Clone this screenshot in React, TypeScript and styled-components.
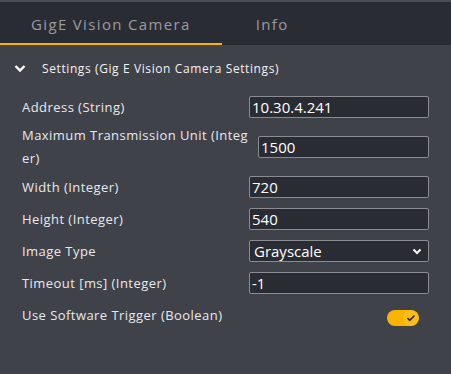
import React from 'react'
import styled, { createGlobalStyle } from 'styled-components'

const GlobalStyle = createGlobalStyle`
    body {
        margin: 0;
        background: #40424a;
        font-family: 'Open Sans', 'Liberation Sans', sans-serif;
    }
`

type Field = {
    label: string
    value: string
    kind: 'text' | 'select' | 'toggle'
    inputWidth?: number
}

const fields: Field[] = [
    { label: 'Address (String)', value: '10.30.4.241', kind: 'text' },
    { label: 'Maximum Transmission Unit (Integer)', value: '1500', kind: 'text', inputWidth: 171 },
    { label: 'Width (Integer)', value: '720', kind: 'text' },
    { label: 'Height (Integer)', value: '540', kind: 'text' },
    { label: 'Image Type', value: 'Grayscale', kind: 'select' },
    { label: 'Timeout [ms] (Integer)', value: '-1', kind: 'text' },
    { label: 'Use Software Trigger (Boolean)', value: 'true', kind: 'toggle' },
]

function App() {
    return (
        <Wrapper>
            <GlobalStyle />
            <TabBar>
                <Tab active>GigE Vision Camera</Tab>
                <Tab $left={34}>Info</Tab>
            </TabBar>
            <Section>
                <SectionHeader>
                    <svg width='12' height='9' viewBox='0 0 12 9'>
                        <path d='M1.5 2 L6 6.5 L10.5 2' fill='none' stroke='#ffffff' strokeWidth='2.4' />
                    </svg>
                    <span>Settings (Gig E Vision Camera Settings)</span>
                </SectionHeader>
                <FieldList>
                    {fields.map((f) => (
                        <Row key={f.label} tall={f.inputWidth !== undefined}>
                            <Label>{f.label}</Label>
                            {f.kind === 'text' && <TextInput defaultValue={f.value} $width={f.inputWidth ?? 180} />}
                            {f.kind === 'select' && (
                                <SelectBox>
                                    <span>{f.value}</span>
                                    <svg width='10' height='7' viewBox='0 0 10 7'>
                                        <path d='M1.5 1.5 L5 5 L8.5 1.5' fill='none' stroke='#ffffff' strokeWidth='2' />
                                    </svg>
                                </SelectBox>
                            )}
                            {f.kind === 'toggle' && (
                                <ToggleCell>
                                    <Toggle>
                                        <Knob>
                                            <svg width='10' height='8' viewBox='0 0 10 8'>
                                                <path d='M1.5 4.2 L3.8 6.3 L8.5 1.5' fill='none' stroke='#2b2b2b' strokeWidth='1.6' />
                                            </svg>
                                        </Knob>
                                    </Toggle>
                                </ToggleCell>
                            )}
                        </Row>
                    ))}
                </FieldList>
            </Section>
        </Wrapper>
    )
}

export default App

const Wrapper = styled.main`
    width: 451px;
    height: 374px;
    background: #40424a;
    display: flex;
    flex-direction: column;
`

const TabBar = styled.div`
    display: flex;
    height: 43px;
    border-top: 2px solid #4a4c53;
    background: #2a2c33;
`

const Tab = styled.div<{ active?: boolean; $left?: number }>`
    padding: 0 31px 0 ${(p) => p.$left ?? 31}px;
    display: flex;
    align-items: center;
    font-size: 15px;
    letter-spacing: 1.35px;
    color: #9a9ba0;
    box-shadow: ${(p) => (p.active ? 'inset 0 -2px 0 #f8b400' : 'none')};
`

const Section = styled.section`
    display: flex;
    flex-direction: column;
`

const SectionHeader = styled.div`
    display: flex;
    align-items: center;
    gap: 16px;
    padding: 0 14px;
    height: 46px;
    color: #f2f2f2;
    font-size: 12px;
    letter-spacing: 0.6px;
`

const FieldList = styled.div`
    display: flex;
    flex-direction: column;
    padding: 0 22px;
`

const Row = styled.div<{ tall?: boolean }>`
    display: flex;
    align-items: center;
    min-height: ${(p) => (p.tall ? 48 : 32)}px;
    gap: 8px;
`

const Label = styled.div`
    flex: 1;
    color: #e8e8ea;
    font-size: 13px;
    letter-spacing: 0.45px;
    line-height: 23px;
    word-break: break-all;
`

const TextInput = styled.input<{ $width: number }>`
    box-sizing: border-box;
    width: ${(p) => p.$width}px;
    height: 22px;
    padding: 0 2px;
    background: #2a2c33;
    border: 1px solid #8a8c91;
    border-radius: 2px;
    color: #ffffff;
    font-family: inherit;
    font-size: 15px;
    outline: none;
`

const SelectBox = styled.div`
    box-sizing: border-box;
    width: 180px;
    height: 22px;
    padding: 0 6px 0 4px;
    background: #2a2c33;
    border: 1px solid #8a8c91;
    border-radius: 2px;
    color: #ffffff;
    font-size: 15px;
    display: flex;
    align-items: center;
    justify-content: space-between;
`

const ToggleCell = styled.div`
    width: 180px;
    display: flex;
    justify-content: flex-end;
    padding-right: 10px;
    box-sizing: border-box;
    margin-top: 6px;
`

const Toggle = styled.div`
    width: 32px;
    height: 16px;
    border-radius: 8px;
    background: #f8b400;
    display: flex;
    align-items: center;
    justify-content: flex-end;
    padding: 0 1px;
    box-sizing: border-box;
`

const Knob = styled.div`
    width: 14px;
    height: 14px;
    border-radius: 50%;
    background: #f9bc1a;
    box-shadow: 0 0 0 1px rgba(255, 255, 255, 0.12);
    display: flex;
    align-items: center;
    justify-content: center;
`
